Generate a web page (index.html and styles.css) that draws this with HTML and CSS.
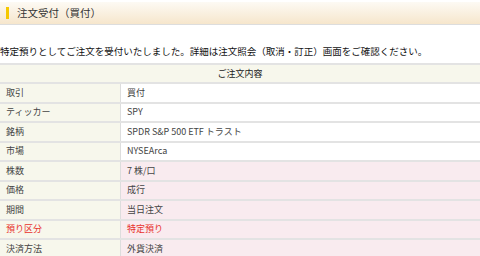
FILE: index.html
```html
<!DOCTYPE html>
<html lang="ja">
  <head>
    <meta charset="UTF-8" />
    <meta name="viewport" content="width=device-width, initial-scale=1.0" />
    <title>注文受付（買付）</title>
    <link rel="stylesheet" href="styles.css">
  </head>
  <body>
    <div class="page-head">
      <h1>注文受付（買付）</h1>
    </div>

    <p class="notice">特定預りとしてご注文を受付いたしました。詳細は注文照会（取消・訂正）画面をご確認ください。</p>

    <table class="order">
      <thead>
        <tr><th colspan="2">ご注文内容</th></tr>
      </thead>
      <tbody>
        <tr><td class="label">取引</td><td>買付</td></tr>
        <tr><td class="label">ティッカー</td><td>SPY</td></tr>
        <tr><td class="label">銘柄</td><td>SPDR S&amp;P 500 ETF トラスト</td></tr>
        <tr><td class="label">市場</td><td>NYSEArca</td></tr>
        <tr class="changed"><td class="label">株数</td><td>7 株/口</td></tr>
        <tr class="changed"><td class="label">価格</td><td>成行</td></tr>
        <tr class="changed"><td class="label">期間</td><td>当日注文</td></tr>
        <tr class="changed warn"><td class="label">預り区分</td><td>特定預り</td></tr>
        <tr class="changed"><td class="label">決済方法</td><td>外貨決済</td></tr>
      </tbody>
    </table>
  </body>
</html>
```

FILE: styles.css
```css
body {
  margin: 0;
  font-family: "Noto Sans CJK JP", "Noto Sans", sans-serif;
  color: #333;
  background: #fff;
}

.page-head {
  margin-top: 2px;
  height: 22px;
  border-bottom: 1px solid #ddd;
  background: linear-gradient(to bottom, #fdfaf4, #f6e6cc);
  display: flex;
  align-items: center;
}

h1 {
  margin: 0 0 0 6px;
  padding-left: 8px;
  border-left: 3px solid #f5c800;
  font-size: 10.5px;
  font-weight: normal;
  line-height: 12px;
  color: #333;
}

.notice {
  margin: 19px 0 5px;
  font-size: 9.5px;
  line-height: 14px;
  color: #111;
}

.order {
  width: 100%;
  border-collapse: collapse;
  font-size: 9px;
  line-height: 12px;
}

.order th {
  height: 17px;
  padding: 0;
  background: #f7f7ec;
  border-top: 2px solid #e3e3e3;
  border-bottom: 2px solid #e3e3e3;
  font-weight: normal;
  color: #222;
}

.order td {
  height: 17.5px;
  padding: 0 6px;
  border-bottom: 2px solid #e3e3e3;
  color: #444;
}

.order td.label {
  width: 108px;
  background: #f7f7ec;
  border-right: 1px solid #ddd;
}

.order tr.changed td {
  background: #f9ebef;
}

.order tr.changed td.label {
  background: #f7f7ec;
}

.order tr.warn td {
  color: #e8332d;
}
```
